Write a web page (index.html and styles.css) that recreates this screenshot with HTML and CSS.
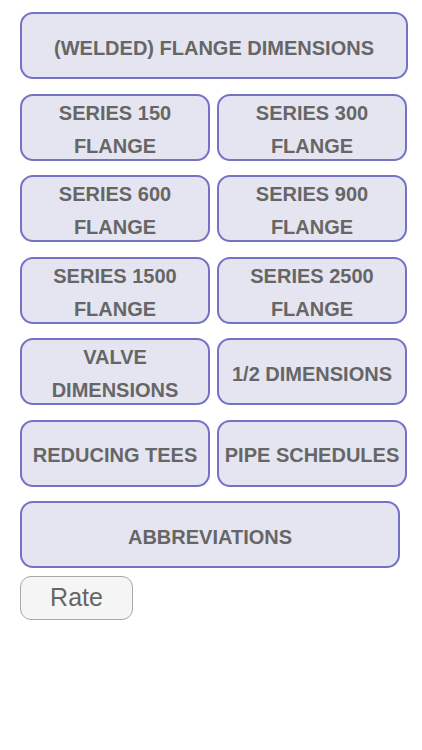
FILE: index.html
```html
<!DOCTYPE html>
<html>
<head>
<meta charset="utf-8">
<link rel="stylesheet" href="styles.css">
</head>
<body>
<div class="menu">
  <div class="btn wide">(WELDED) FLANGE DIMENSIONS</div>
  <div class="pair">
    <div class="btn">SERIES 150<br>FLANGE</div>
    <div class="btn">SERIES 300<br>FLANGE</div>
  </div>
  <div class="pair">
    <div class="btn">SERIES 600<br>FLANGE</div>
    <div class="btn">SERIES 900<br>FLANGE</div>
  </div>
  <div class="pair">
    <div class="btn">SERIES 1500<br>FLANGE</div>
    <div class="btn">SERIES 2500<br>FLANGE</div>
  </div>
  <div class="pair">
    <div class="btn">VALVE<br>DIMENSIONS</div>
    <div class="btn">1/2 DIMENSIONS</div>
  </div>
  <div class="pair">
    <div class="btn">REDUCING TEES</div>
    <div class="btn">PIPE SCHEDULES</div>
  </div>
  <div class="btn abbr">ABBREVIATIONS</div>
  <div class="rate">Rate</div>
</div>
</body>
</html>
```
FILE: styles.css
```css
html, body {
  margin: 0;
  padding: 0;
  background: #ffffff;
}
.menu {
  padding: 12px 0 0 20px;
  display: flex;
  flex-direction: column;
  gap: 14.5px;
  align-items: flex-start;
  font-family: "Liberation Sans", Arial, sans-serif;
}
.pair {
  display: flex;
  gap: 7px;
}
.btn {
  box-sizing: border-box;
  width: 190px;
  height: 67px;
  border: 2px solid #7472c4;
  border-radius: 13px;
  background: #e5e5f1;
  color: #666666;
  font-weight: bold;
  font-size: 20px;
  line-height: 33px;
  text-align: center;
  padding: 5px 0 0 0;
  display: flex;
  flex-direction: column;
  justify-content: center;
  white-space: nowrap;
}
.btn.wide {
  width: 388px;
}
.btn.abbr {
  width: 380px;
}
.rate {
  box-sizing: border-box;
  margin-top: -6.5px;
  width: 113px;
  height: 44px;
  border: 1.5px solid #a8a8a8;
  border-radius: 11px;
  background: #f5f5f5;
  color: #666666;
  font-size: 25px;
  line-height: 40px;
  text-align: center;
}
```
